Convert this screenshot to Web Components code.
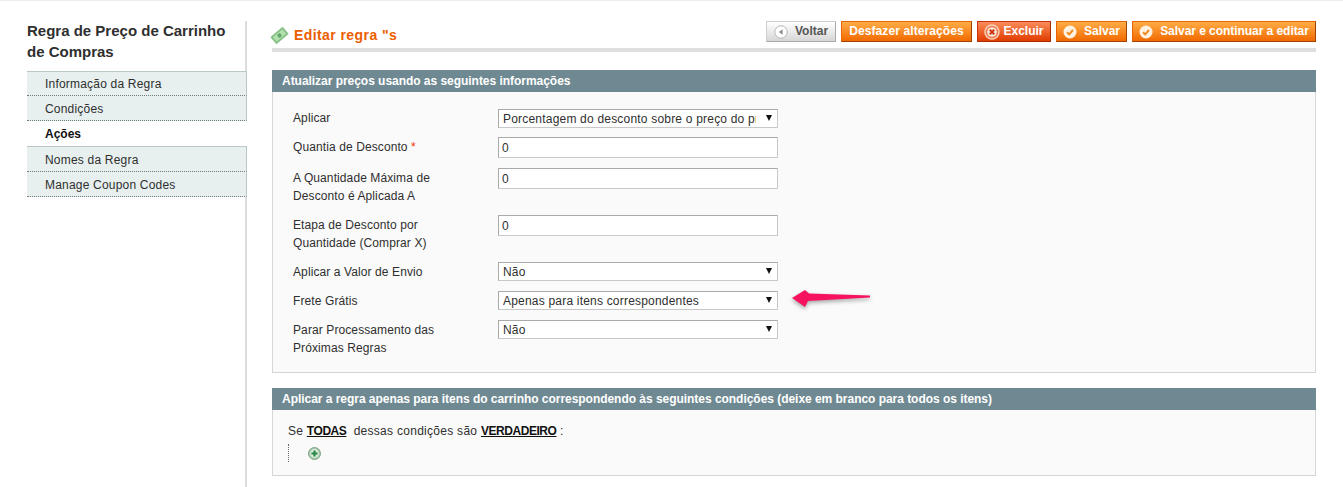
<!DOCTYPE html>
<html lang="pt">
<head>
<meta charset="utf-8">
<title>Editar regra</title>
<style>
  html, body { margin: 0; padding: 0; background: #fff; }
  body { font: 12px/18px "Liberation Sans", Arial, sans-serif; color: #2f2f2f; height: 487px; overflow: hidden; }
</style>
</head>
<body>
<rule-page>
  <side-menu slot="side" heading="Regra de Preço de Carrinho de Compras">
    <menu-item first>Informação da Regra</menu-item>
    <menu-item>Condições</menu-item>
    <menu-item active>Ações</menu-item>
    <menu-item>Nomes da Regra</menu-item>
    <menu-item>Manage Coupon Codes</menu-item>
  </side-menu>

  <page-head>
    <action-button slot="actions" kind="back" icon="back" style="width:70px">Voltar</action-button>
    <action-button slot="actions" style="width:131px;letter-spacing:.1px">Desfazer alterações</action-button>
    <action-button slot="actions" kind="delete" icon="delete" style="width:74px">Excluir</action-button>
    <action-button slot="actions" icon="save" style="width:71px">Salvar</action-button>
    <action-button slot="actions" icon="save" style="width:184px;letter-spacing:-.05px">Salvar e continuar a editar</action-button>
  </page-head>

  <form-section heading="Atualizar preços usando as seguintes informações" style="--body-height:281px">
    <div style="height:16px"></div>
    <form-row label="Aplicar" height="29"><rule-select value="Porcentagem do desconto sobre o preço do produto"></rule-select></form-row>
    <form-row label="Quantia de Desconto" required height="31"><rule-input value="0"></rule-input></form-row>
    <form-row label="A Quantidade Máxima de Desconto é Aplicada A" height="47"><rule-input value="0"></rule-input></form-row>
    <form-row label="Etapa de Desconto por Quantidade (Comprar X)" height="46"><rule-input value="0"></rule-input></form-row>
    <form-row label="Aplicar a Valor de Envio" height="29" low><rule-select value="Não"></rule-select></form-row>
    <form-row label="Frete Grátis" height="29" low><rule-select value="Apenas para itens correspondentes"></rule-select><pink-arrow></pink-arrow></form-row>
    <form-row label="Parar Processamento das Próximas Regras" height="46" low><rule-select value="Não"></rule-select></form-row>
  </form-section>

  <form-section heading="Aplicar a regra apenas para itens do carrinho correspondendo às seguintes condições (deixe em branco para todos os itens)" style="--body-height:66px;margin-top:15px">
    <condition-tree></condition-tree>
  </form-section>
</rule-page>

<script>
class RulePage extends HTMLElement {
  constructor() {
    super();
    this.attachShadow({ mode: "open" });
    this.shadowRoot.innerHTML = `
      <style>
        :host { display: block; border-top: 1px solid #ececec; }
        .wrap { display: flex; padding-left: 27px; padding-top: 20px; }
        .side { flex: none; width: 218px; border-right: 2px solid #dcdcdc; height: 466px; }
        .main { flex: none; width: 1044px; margin-left: 25px; }
      </style>
      <div class="wrap">
        <div class="side"><slot name="side"></slot></div>
        <div class="main"><slot></slot></div>
      </div>
    `;
  }
}

class SideMenu extends HTMLElement {
  constructor() {
    super();
    this.attachShadow({ mode: "open" });
    this.shadowRoot.innerHTML = `
      <style>
        :host { display: block; margin-right: -2px; }
        h3 { margin: -1px 0 0; padding: 0 14px 9px 0; font-size: 15px; line-height: 21px; font-weight: bold; color: #2f2f2f; }
      </style>
      <h3></h3>
      <slot></slot>
    `;
    this.shadowRoot.querySelector("h3").textContent = this.getAttribute("heading");
  }
}

class MenuItem extends HTMLElement {
  constructor() {
    super();
    this.attachShadow({ mode: "open" });
    this.shadowRoot.innerHTML = `
      <style>
        :host { display: block; box-sizing: border-box; height: 25px; padding: 1px 0 0 18px; line-height: 24px; background: #e7efef; border-bottom: 1px dotted #6f7a7a; border-right: 1px solid #bcc8c8; color: #2f2f2f; letter-spacing: .2px; }
        :host([first]) { border-top: 1px solid #bcc8c8; line-height: 23px; }
        :host([active]) { height: 26px; background: #fff; border-right: 0; border-bottom: 1px solid #bcc8c8; font-weight: bold; color: #111; letter-spacing: 0; }
      </style>
      <slot></slot>
    `;
  }
}

class PageHead extends HTMLElement {
  constructor() {
    super();
    this.attachShadow({ mode: "open" });
    this.shadowRoot.innerHTML = `
      <style>
        :host { display: flex; box-sizing: border-box; height: 31px; margin-bottom: 18px; align-items: flex-start; justify-content: space-between; border-bottom: 4px solid #dfdfdf; }
        h3 { display: flex; align-items: center; margin: 0; padding-top: 4px; height: 20px; font-size: 14px; line-height: 20px; font-weight: bold; color: #eb5e00; letter-spacing: .42px; }
        svg { margin-right: 7px; flex: none; overflow: visible; }
        .actions { display: flex; gap: 5px; }
      </style>
      <h3>
        <svg width="15" height="15" viewBox="0 0 15 15">
          <g transform="rotate(-40 7.5 7.5)">
            <rect x="-.4" y="3" width="15.8" height="9" rx=".6" fill="#7fbd80" stroke="#a3d0a3" stroke-width=".6"/>
            <rect x="1.2" y="4.5" width="12.6" height="6" fill="#b4e0ae"/>
            <circle cx="7.5" cy="7.5" r="2.1" fill="#5fa868"/>
          </g>
        </svg>
        Editar regra "s
      </h3>
      <div class="actions"><slot name="actions"></slot></div>
    `;
  }
}

const BUTTON_ICONS = {
  back: `<svg width="14" height="14" viewBox="0 0 14 14"><circle cx="7" cy="7" r="6.2" fill="#fff" stroke="#b5b5b5"/><path d="M8.6 4.2v5.6L4.8 7z" fill="#8c8c8c"/></svg>`,
  delete: `<svg width="16" height="16" viewBox="0 0 16 16"><circle cx="8" cy="8" r="7" fill="#ec7a4a" stroke="#fcd2bd" stroke-width="1.4"/><circle cx="8" cy="8" r="4.8" fill="#fde6da"/><path d="M5.8 5.8l4.4 4.4M10.2 5.8l-4.4 4.4" stroke="#c93a12" stroke-width="2.2"/></svg>`,
  save: `<svg width="14" height="14" viewBox="0 0 14 14"><circle cx="7" cy="7" r="6.5" fill="#fff2e2"/><path d="M4 7.2l2.2 2.2L10 5" fill="none" stroke="#f28a22" stroke-width="2"/></svg>`
};

class ActionButton extends HTMLElement {
  constructor() {
    super();
    this.attachShadow({ mode: "open" });
    const kind = this.getAttribute("icon");
    const icon = BUTTON_ICONS[kind] || "";
    this.shadowRoot.innerHTML = `
      <style>
        :host { display: block; box-sizing: border-box; height: 21px; border: 1px solid #ed6502; border-right-color: #a04300; border-bottom-color: #a04300; background: linear-gradient(#ffac47, #f16a00); color: #fff; font-weight: bold; }
        :host([kind="delete"]) { border-color: #c8320a #a72c00 #a72c00 #c8320a; background: linear-gradient(#f98c5b, #e13c00); }
        :host([kind="back"]) { border-color: #cfcfcf #aaa #aaa #cfcfcf; background: linear-gradient(#fff, #d6d6d6); color: #555; }
        button { all: unset; box-sizing: border-box; display: flex; width: 100%; height: 19px; align-items: center; justify-content: center; gap: ${kind === "delete" ? 3 : 7}px; font: inherit; color: inherit; line-height: 19px; white-space: nowrap; }
        svg { flex: none; }
      </style>
      <button type="button">${icon}<span><slot></slot></span></button>
    `;
  }
}

class FormSection extends HTMLElement {
  constructor() {
    super();
    this.attachShadow({ mode: "open" });
    this.shadowRoot.innerHTML = `
      <style>
        :host { display: block; }
        header { box-sizing: border-box; height: 22px; padding-left: 10px; background: #6f8992; color: #fff; font-weight: bold; line-height: 22px; letter-spacing: -.035px; }
        .body { box-sizing: border-box; height: var(--body-height); background: #fafafa; border: 1px solid #d6d6d6; border-top: 0; padding-left: 20px; }
      </style>
      <header></header>
      <div class="body"><slot></slot></div>
    `;
    this.shadowRoot.querySelector("header").textContent = this.getAttribute("heading");
  }
}

class FormRow extends HTMLElement {
  constructor() {
    super();
    this.attachShadow({ mode: "open" });
    const req = this.hasAttribute("required") ? ' <span class="req">*</span>' : "";
    this.shadowRoot.innerHTML = `
      <style>
        :host { display: flex; position: relative; box-sizing: border-box; }
        .label { flex: none; width: 205px; line-height: 18px; padding: 1px 30px 0 0; box-sizing: border-box; letter-spacing: .1px; }
        :host([low]) .label { padding-top: 2px; }
        .req { color: #eb340a; }
        .value { flex: none; width: 280px; position: relative; }
      </style>
      <div class="label"><span class="text"></span>${req}</div>
      <div class="value"><slot></slot></div>
    `;
    this.shadowRoot.querySelector(".text").textContent = this.getAttribute("label");
    this.style.height = this.getAttribute("height") + "px";
  }
}

class RuleSelect extends HTMLElement {
  constructor() {
    super();
    this.attachShadow({ mode: "open" });
    this.shadowRoot.innerHTML = `
      <style>
        :host { display: block; position: relative; margin-top: 1px; width: 280px; height: 19px; }
        select { appearance: none; -webkit-appearance: none; box-sizing: border-box; display: block; width: 100%; height: 19px; margin: 0; padding: 0 21px 0 4px; border: 1px solid; border-color: #aaa #c8c8c8 #c8c8c8 #aaa; border-radius: 0; background: #fff; font: 12px "Liberation Sans", Arial, sans-serif; color: #2f2f2f; letter-spacing: .2px; }
        i { position: absolute; right: 6px; top: 6px; width: 0; height: 0; border: 3px solid transparent; border-top: 6px solid #111; border-bottom: 0; pointer-events: none; }
      </style>
      <select><option></option></select>
      <i></i>
    `;
    this.shadowRoot.querySelector("option").textContent = this.getAttribute("value");
  }
}

class RuleInput extends HTMLElement {
  constructor() {
    super();
    this.attachShadow({ mode: "open" });
    this.shadowRoot.innerHTML = `
      <style>
        :host { display: block; width: 280px; height: 21px; }
        input { box-sizing: border-box; display: block; width: 100%; height: 21px; margin: 0; padding: 0 3px; border: 1px solid; border-color: #aaa #c8c8c8 #c8c8c8 #aaa; border-radius: 0; outline: 0; background: #fff; font: 12px "Liberation Sans", Arial, sans-serif; color: #2f2f2f; }
      </style>
      <input type="text">
    `;
    this.shadowRoot.querySelector("input").value = this.getAttribute("value");
  }
}

class PinkArrow extends HTMLElement {
  constructor() {
    super();
    this.attachShadow({ mode: "open" });
    this.shadowRoot.innerHTML = `
      <style>
        :host { position: absolute; left: 292px; top: -1px; width: 84px; height: 24px; }
        svg { display: block; overflow: visible; filter: drop-shadow(0 2px 2px rgba(0,0,0,.35)); }
      </style>
      <svg width="84" height="24" viewBox="0 0 84 24">
        <path d="M2 9 L15 1 L19 4.5 L80 6.5 L80 8.5 L18 12 L15 18 Z" fill="#f6125f"/>
      </svg>
    `;
  }
}

class ConditionTree extends HTMLElement {
  constructor() {
    super();
    this.attachShadow({ mode: "open" });
    this.shadowRoot.innerHTML = `
      <style>
        :host { display: block; margin-left: -5px; padding-top: 12px; letter-spacing: .28px; }
        b { color: #111; text-decoration: underline; letter-spacing: -.45px; }
        ul { list-style: none; margin: 4px 0 0 0; padding: 0 0 0 19px; border-left: 1px dotted #666; width: 40px; height: 18px; display: flex; align-items: center; }
        svg { display: block; }
      </style>
      <div>Se <b>TODAS</b> &nbsp;dessas condições são <b>VERDADEIRO</b> :</div>
      <ul>
        <li>
          <svg width="13" height="13" viewBox="0 0 13 13">
            <circle cx="6.5" cy="6.5" r="6" fill="#a9c9ae" stroke="#7da585"/>
            <circle cx="6.5" cy="6.5" r="4.4" fill="#dcebdd"/>
            <path d="M6.5 3.4v6.2M3.4 6.5h6.2" stroke="#2c8a49" stroke-width="2.2"/>
          </svg>
        </li>
      </ul>
    `;
  }
}

customElements.define("rule-page", RulePage);
customElements.define("side-menu", SideMenu);
customElements.define("menu-item", MenuItem);
customElements.define("page-head", PageHead);
customElements.define("action-button", ActionButton);
customElements.define("form-section", FormSection);
customElements.define("form-row", FormRow);
customElements.define("rule-select", RuleSelect);
customElements.define("rule-input", RuleInput);
customElements.define("pink-arrow", PinkArrow);
customElements.define("condition-tree", ConditionTree);
</script>
</body>
</html>
